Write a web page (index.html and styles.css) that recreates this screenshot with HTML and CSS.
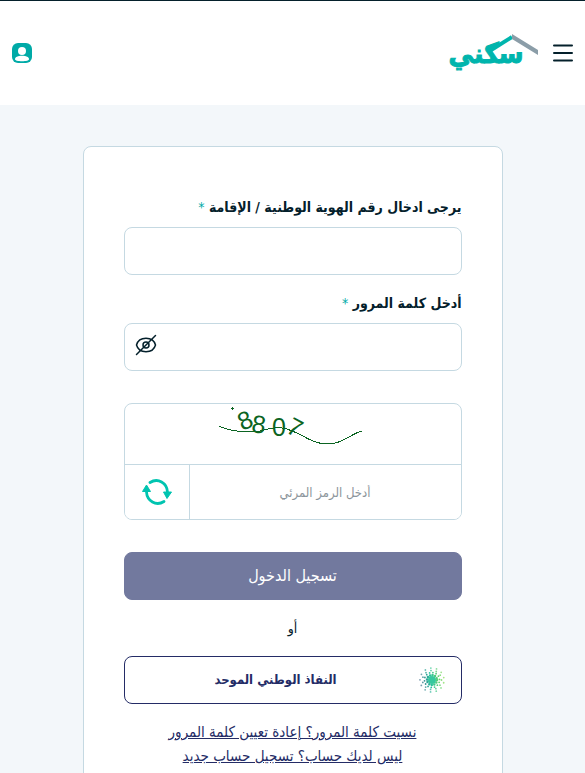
FILE: index.html
```html
<!DOCTYPE html>
<html lang="ar" dir="rtl">
<head>
  <meta charset="UTF-8">
  <meta name="viewport" content="width=device-width, initial-scale=1">
  <title>سكني</title>
  <link rel="stylesheet" href="styles.css">
</head>
<body>
<header class="header">
  <div class="header-start">
    <button type="button" class="icon-btn" aria-label="القائمة">
      <svg width="20" height="18" viewBox="0 0 20 18" fill="none" stroke="#04202b" stroke-width="2" stroke-linecap="round">
        <path d="M1 1.5h18M1 9h18M1 16.5h18"/>
      </svg>
    </button>
    <a href="#" class="logo" aria-label="سكني">
      <svg width="90" height="38" viewBox="0 0 90 38">
        <path d="M40 18L64 3" fill="none" stroke="#00b5ad" stroke-width="4"/>
        <path d="M64 0v5l26 16v-5z" fill="#8b9da8"/>
        <text class="logo-text" x="38" y="29" text-anchor="middle">سكني</text>
      </svg>
    </a>
  </div>
  <a href="#" class="user" aria-label="حسابي">
    <svg width="20" height="20" viewBox="0 0 20 20">
      <rect width="20" height="20" rx="6" fill="#00aaa7"/>
      <circle cx="10" cy="8" r="4" fill="#fff"/>
      <path d="M3 16.200c0-2.200 3-3.400 7-3.400s7 1.200 7 3.400c0 1.200-3 2-7 2s-7-.8-7-2z" fill="#fff"/>
    </svg>
  </a>
</header>

<main class="main">
  <form class="card">
    <div class="field">
      <label for="nid">يرجى ادخال رقم الهوية الوطنية / الإقامة <span class="req">*</span></label>
      <input type="text" id="nid" class="input">
    </div>
    <div class="field">
      <label for="pass">أدخل كلمة المرور <span class="req">*</span></label>
      <div class="pass-box">
        <input type="password" id="pass" class="input">
        <button type="button" class="icon-btn eye" aria-label="إظهار كلمة المرور">
          <svg width="22" height="22" viewBox="0 0 22 22" fill="none" stroke="#04202b" stroke-width="1.500" stroke-linecap="round">
            <path d="M1.500 11C4 2 18 2 20.500 11C18 20 4 20 1.500 11z"/>
            <circle cx="11" cy="11" r="3"/>
            <path d="M1.500 20.500l19-19"/>
          </svg>
        </button>
      </div>
    </div>

    <div class="captcha">
      <div class="captcha-img">
        <svg width="150" height="60" viewBox="0 0 150 60" shape-rendering="crispEdges">
          <g class="captcha-digits">
            <text x="27" y="25" transform="rotate(-24 27 16)">8</text>
            <text x="41" y="29" transform="rotate(8 41 20)">8</text>
            <text x="61" y="32">0</text>
            <text x="77" y="32" transform="rotate(28 77 23)">7</text>
          </g>
          <path d="M1 22C10 27 20 28 34 28C46 28 52 22 64 24C80 26 92 40 109 40C125 40 132 30 144 27" fill="none" stroke="#0b6422"/>
          <path d="M14 3v3M12.500 4.500h3" stroke="#0b6422"/>
        </svg>
      </div>
      <div class="captcha-row">
        <input type="text" class="captcha-input" placeholder="أدخل الرمز المرئي" aria-label="أدخل الرمز المرئي">
        <button type="button" class="refresh" aria-label="تحديث الرمز">
          <svg width="30" height="26" viewBox="0 0 30 26">
            <g fill="none" stroke="#00c4b0" stroke-width="2.800" stroke-linecap="round">
              <path d="M8 3.500C16-1.500 25 4 25.500 13"/>
              <path d="M22 22.500C14 27.500 5 22 4.500 13"/>
            </g>
            <path d="M21.500 13h8l-4.500 6.500zM.5 12.500h8L4.500 6z" fill="#00c4b0" stroke="#00c4b0" stroke-linejoin="round"/>
          </svg>
        </button>
      </div>
    </div>

    <button type="submit" class="btn btn-login">تسجيل الدخول</button>
    <p class="or">أو</p>
    <button type="button" class="btn btn-nafath">
      <svg width="26" height="28" viewBox="0 0 26 28">
        <defs>
          <linearGradient id="dots" gradientUnits="userSpaceOnUse" x1="0" y1="16" x2="26" y2="12">
            <stop offset="0" stop-color="#3f6688"/>
            <stop offset=".45" stop-color="#2ac19d"/>
            <stop offset="1" stop-color="#8ade4c"/>
          </linearGradient>
        </defs>
        <circle cx="13" cy="14" r="4" fill="#35c89e"/>
        <g fill="none" stroke="url(#dots)" stroke-linecap="round">
          <circle cx="13" cy="14" r="5" stroke-width="2.500" stroke-dasharray="0 2.620"/>
          <circle cx="13" cy="14" r="7.500" stroke-width="1.800" stroke-dasharray="0 3.370" stroke-dashoffset="1"/>
          <circle cx="13" cy="14" r="9.500" stroke-width="1.800" stroke-dasharray="0 5.430" opacity=".8"/>
          <circle cx="13" cy="14" r="12" stroke-width="1.800" stroke-dasharray="0 5.800" stroke-dashoffset="3" opacity=".7"/>
        </g>
      </svg>
      <span>النفاذ الوطني الموحد</span>
    </button>

    <div class="links">
      <a href="#">نسيت كلمة المرور؟ إعادة تعيين كلمة المرور</a>
      <a href="#">ليس لديك حساب؟ تسجيل حساب جديد</a>
    </div>
  </form>
</main>
</body>
</html>
```

FILE: styles.css
```css
* {
  box-sizing: border-box;
  margin: 0;
  padding: 0;
}

body {
  background: #f3f7fa;
  color: #04202b;
  font-family: "DejaVu Sans Condensed", "DejaVu Sans", sans-serif;
  font-size: 14px;
  line-height: 24px;
}

button,
input {
  font: inherit;
  color: inherit;
}

button {
  cursor: pointer;
}

svg {
  display: block;
}

.header {
  display: flex;
  align-items: center;
  justify-content: space-between;
  height: 105px;
  padding: 0 12px;
  background: #fff;
  border-top: 1px solid #04202b;
}

.header-start {
  display: flex;
  align-items: center;
  gap: 15px;
}

.icon-btn {
  background: none;
  border: 0;
}

.logo-text {
  font-size: 28px;
  font-weight: bold;
  fill: #00b5ad;
  stroke: #00b5ad;
}

.main {
  padding: 41px 16px;
}

.card {
  max-width: 420px;
  margin: 0 auto;
  padding: 48px 40px;
  background: #fff;
  border: 1px solid #c5d9e2;
  border-radius: 8px;
}

.field {
  margin-bottom: 16px;
}

.field label {
  display: block;
  margin-bottom: 8px;
  font-weight: bold;
}

.req {
  color: #00aaa7;
  font-weight: normal;
}

.input {
  display: block;
  width: 100%;
  height: 48px;
  padding: 0 12px;
  background: #fff;
  border: 1px solid #c5d9e2;
  border-radius: 8px;
}

.pass-box {
  position: relative;
}

.eye {
  position: absolute;
  left: 11px;
  top: 11px;
}

.captcha {
  margin: 32px 0;
  border: 1px solid #c5d9e2;
  border-radius: 8px;
  overflow: hidden;
}

.captcha-img {
  display: flex;
  justify-content: center;
}

.captcha-digits {
  font-family: "Liberation Sans", sans-serif;
  font-size: 25px;
  text-anchor: middle;
  fill: #0b6422;
}

.captcha-row {
  display: flex;
  height: 55px;
  border-top: 1px solid #c5d9e2;
}

.captcha-input {
  flex: 1;
  min-width: 0;
  border: 0;
  text-align: center;
}

.captcha-input::placeholder {
  color: #8c959b;
  font-size: 13px;
  opacity: 1;
}

.refresh {
  display: flex;
  align-items: center;
  justify-content: center;
  width: 65px;
  background: #fff;
  border: 0;
  border-right: 1px solid #c5d9e2;
}

.btn {
  display: flex;
  align-items: center;
  justify-content: center;
  width: 100%;
  height: 48px;
  border: 1px solid;
  border-radius: 8px;
}

.btn-login {
  background: #72799e;
  border-color: #72799e;
  color: #fff;
  font-size: 16px;
}

.or {
  margin: 16px 0;
  text-align: center;
}

.btn-nafath {
  padding: 0 16px 0 8px;
  background: #fff;
  border-color: #242c66;
  color: #242c66;
  font-size: 13px;
  font-weight: bold;
}

.btn-nafath span {
  flex: 1;
}

.links {
  margin-top: 16px;
  font-size: 15px;
  text-align: center;
}

.links a {
  display: block;
  color: #242c66;
}
```
